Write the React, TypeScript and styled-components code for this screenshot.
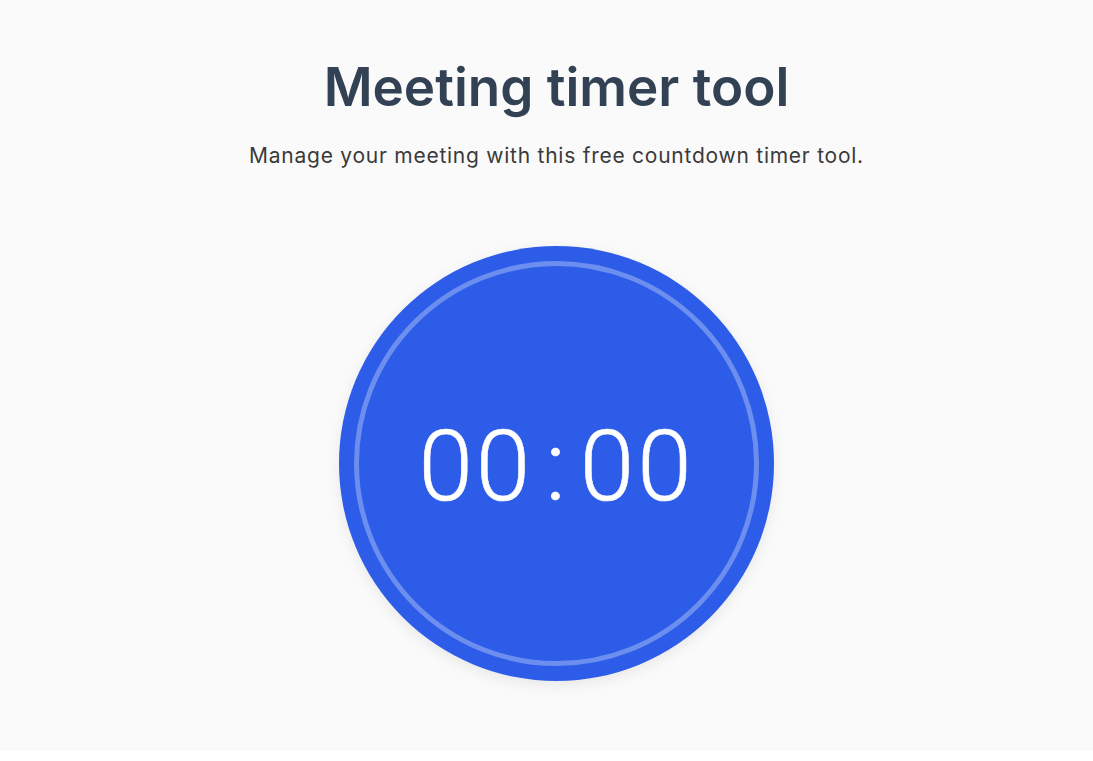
import styled, { createGlobalStyle } from "styled-components";

const GlobalStyle = createGlobalStyle`
  html, body {
    margin: 0;
    padding: 0;
    background: #ffffff;
  }
  * {
    box-sizing: border-box;
  }
`;

const Hero = styled.section`
  height: 751px;
  background: #fafafa;
  display: flex;
  flex-direction: column;
  align-items: center;
  padding: 56px 0 0 20px;
  font-family: Inter, "Noto Sans", sans-serif;
`;

const Title = styled.h1`
  margin: 0;
  font-size: 53px;
  line-height: 62px;
  font-weight: 600;
  letter-spacing: 0;
  color: #334155;
`;

const Subtitle = styled.p`
  margin: 24px 0 0;
  font-size: 21px;
  line-height: 28px;
  letter-spacing: 0.75px;
  color: #3a3a3a;
`;

const Dial = styled.div`
  margin-top: 76px;
  width: 435px;
  height: 435px;
  border-radius: 50%;
  background: #2d5de8;
  box-shadow: 0 4px 14px rgba(0, 0, 0, 0.08);
  padding: 15px;
`;

const Ring = styled.div`
  width: 100%;
  height: 100%;
  border-radius: 50%;
  border: 5px solid rgba(255, 255, 255, 0.3);
  display: flex;
  align-items: center;
  justify-content: center;
  padding-top: 7px;
`;

const Clock = styled.div`
  display: flex;
  align-items: center;
  color: #ffffff;
  font-family: Roboto, "Liberation Sans", sans-serif;
  font-weight: 300;
  font-size: 98px;
  line-height: 1;
  -webkit-text-stroke: 0.6px #ffffff;
`;

const Digits = styled.span`
  letter-spacing: 3px;
`;

const Colon = styled.span`
  margin: 0 14px 0 12px;
`;

export default function App() {
  return (
    <>
      <GlobalStyle />
      <Hero>
        <Title>Meeting timer tool</Title>
        <Subtitle>Manage your meeting with this free countdown timer tool.</Subtitle>
        <Dial>
          <Ring>
            <Clock>
              <Digits>00</Digits>
              <Colon>:</Colon>
              <Digits>00</Digits>
            </Clock>
          </Ring>
        </Dial>
      </Hero>
    </>
  );
}
